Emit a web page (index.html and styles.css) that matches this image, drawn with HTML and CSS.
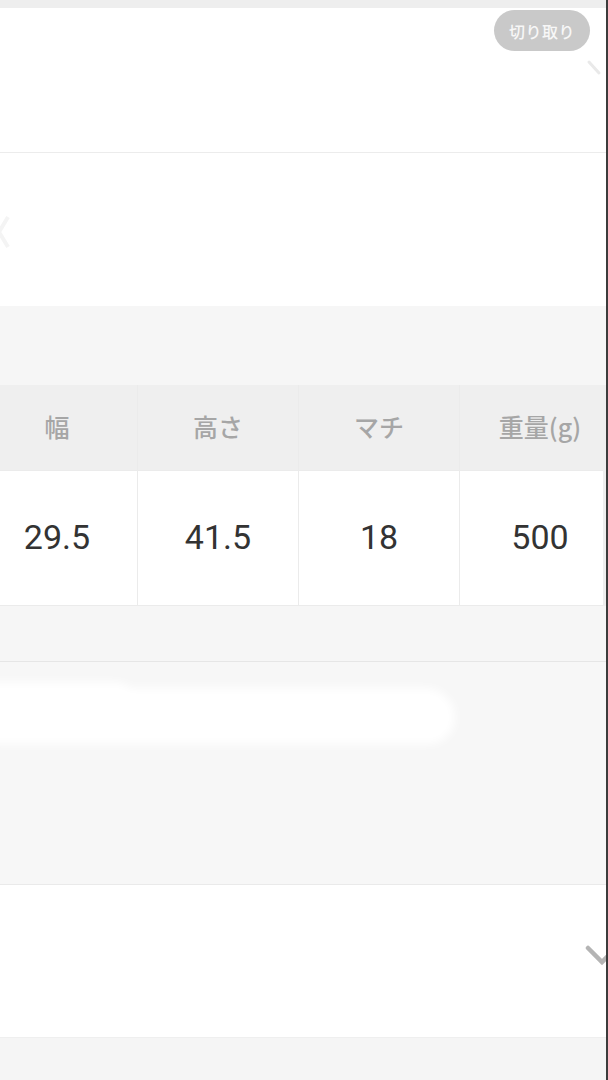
FILE: index.html
```html
<!DOCTYPE html>
<html lang="ja">
<head>
<meta charset="utf-8">
<link rel="stylesheet" href="styles.css">
</head>
<body>
<div class="page">
  <div class="topbar"></div>
  <section class="hero">
    <div class="hero-tools">
      <span class="pill">切り取り</span>
      <svg class="faint-arrow" width="20" height="24" viewBox="0 0 20 24"><path d="M5 5 L15 16" stroke="#e9e9e9" stroke-width="3" stroke-linecap="round" fill="none"/></svg>
    </div>
  </section>
  <section class="slider">
    <svg class="slider-prev" width="14" height="36" viewBox="0 0 14 36"><path d="M10 3 L1 18 L10 33" stroke="#f4f4f4" stroke-width="4" fill="none"/></svg>
  </section>
  <div class="gap gap-top"></div>
  <div class="table-wrap">
    <div class="size-table">
      <div class="th">幅</div>
      <div class="th">高さ</div>
      <div class="th">マチ</div>
      <div class="th">重量(g)</div>
      <div class="td">29.5</div>
      <div class="td">41.5</div>
      <div class="td">18</div>
      <div class="td">500</div>
    </div>
  </div>
  <div class="gap gap-mid"></div>
  <section class="note">
    <div class="blob"></div>
  </section>
  <section class="accordion">
    <svg class="chevron" width="40" height="30" viewBox="0 0 40 30"><path d="M6 6 L20 20 L34 6" stroke="#b4b4b4" stroke-width="4.5" stroke-linecap="round" fill="none"/></svg>
  </section>
  <div class="gap gap-bottom"></div>
</div>
</body>
</html>
```

FILE: styles.css
```css
html, body {
  margin: 0;
  padding: 0;
  background: #f6f6f6;
}
body {
  font-family: "Noto Sans CJK JP", "Noto Sans", sans-serif;
}
.page {
  width: 606px;
  height: 1080px;
  border-right: 2px solid #3c3c3c;
  display: flex;
  flex-direction: column;
  overflow: hidden;
  background: #f6f6f6;
}
.topbar {
  height: 8px;
  background: #eeeeee;
  flex: none;
}
.hero {
  height: 144px;
  background: #ffffff;
  border-bottom: 1px solid #ececec;
  flex: none;
  display: flex;
  justify-content: flex-end;
}
.hero-tools {
  display: flex;
  flex-direction: column;
  align-items: flex-end;
  padding-top: 2px;
  padding-right: 16px;
}
.pill {
  width: 96px;
  height: 41px;
  border-radius: 21px;
  background: #c9c9c9;
  color: #f7f7f7;
  font-size: 16px;
  font-weight: 500;
  display: flex;
  align-items: center;
  justify-content: center;
  letter-spacing: 0.5px;
}
.faint-arrow {
  margin-top: 6px;
  margin-right: -14px;
}
.slider {
  height: 153px;
  background: #ffffff;
  flex: none;
  display: flex;
  align-items: center;
}
.slider-prev {
  margin-left: -2px;
  margin-top: 4px;
}
.gap { flex: none; background: #f6f6f6; }
.gap-top { height: 79px; }
.gap-mid { height: 55px; border-bottom: 1px solid #e6e6e6; }
.table-wrap {
  flex: none;
  width: 603px;
  overflow: hidden;
  border-right: 3px solid #eeeeee;
  background: #f6f6f6;
}
.size-table {
  margin-left: -23px;
  width: 645px;
  display: grid;
  grid-template-columns: repeat(4, 160px);
  grid-template-rows: 85px 134px;
  column-gap: 1px;
  row-gap: 1px;
  background: #ebebeb;
  border-bottom: 1px solid #ebebeb;
}
.th {
  background: #efefef;
  color: #a6a6a6;
  font-size: 25px;
  font-weight: 500;
  display: flex;
  align-items: center;
  justify-content: center;
  padding-bottom: 4px;
}
.td {
  background: #ffffff;
  color: #333333;
  font-family: Roboto, "Noto Sans", sans-serif;
  font-size: 34px;
  display: flex;
  align-items: center;
  justify-content: center;
  padding-bottom: 3px;
}
.note {
  height: 222px;
  background: #f7f7f7;
  border-bottom: 1px solid #eaeaea;
  flex: none;
  overflow: hidden;
}
.blob {
  margin-top: 26px;
  margin-left: -20px;
  width: 475px;
  height: 56px;
  background: #ffffff;
  border-radius: 12px 34px 30px 20px;
  filter: blur(5px);
  box-shadow: -310px -12px 0 -6px #ffffff;
}
.accordion {
  height: 152px;
  background: #ffffff;
  border-bottom: 1px solid #efefef;
  flex: none;
  display: flex;
  align-items: center;
  justify-content: flex-end;
  overflow: hidden;
}
.chevron {
  margin-right: -16px;
  margin-bottom: 8px;
}
.gap-bottom { flex: 1; background: #f5f5f5; }
```
